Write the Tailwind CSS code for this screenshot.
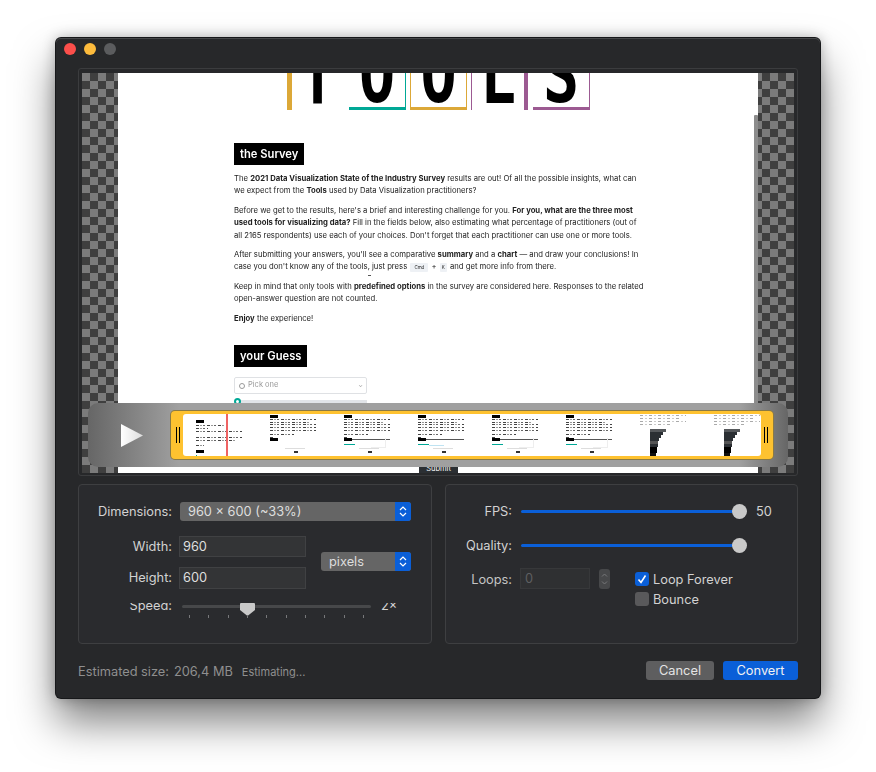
<!DOCTYPE html>
<html lang="en">
<head>
  <meta charset="UTF-8" />
  <title>Convert</title>
  <script src="https://cdn.jsdelivr.net/npm/@tailwindcss/browser@4"></script>
</head>
<body class="bg-white w-[876px] h-[772px] overflow-hidden font-['Inter',sans-serif]">
  <!-- Window -->
  <div class="ml-[56px] mt-[38px] w-[764px] h-[660px] rounded-[5px] bg-[#27282a] shadow-[0_0_0_1px_#17181a,inset_0_1px_0_#47484a,0_24px_42px_rgba(0,0,0,0.5),0_0_14px_rgba(0,0,0,0.3)] text-[12.8px] text-[#d2d2d2]">
    <!-- Title bar -->
    <div class="h-[30px] pl-[8px] pt-[5px] flex gap-[8px]">
      <div class="w-[12px] h-[12px] rounded-full bg-[#fc4f4b]"></div>
      <div class="w-[12px] h-[12px] rounded-full bg-[#fdbb3c]"></div>
      <div class="w-[12px] h-[12px] rounded-full bg-[#5b5c5e]"></div>
    </div>

    <!-- Preview -->
    <div class="relative ml-[22px] w-[720px] h-[408px] border border-[#3b3c3e] rounded-[3px] pt-[4px] pb-[2px] px-[3px]">
      <div class="h-full pl-[36px] bg-[conic-gradient(#3f3f3f_25%,#7b7b7b_0_50%,#3f3f3f_0_75%,#7b7b7b_0)] bg-[length:16px_16px] overflow-hidden">
        <div class="relative h-full w-[640px] bg-white overflow-hidden text-black">
          <!-- Big letters -->
          <div class="ml-[169px] h-[37px] flex gap-[4px] overflow-hidden font-['DejaVu_Sans_Mono',monospace] font-bold text-[60px] leading-none">
            <div class="w-[58px] border-l-[5px] border-[#dca838] flex justify-center items-end"><span class="inline-block origin-bottom scale-y-[1.3] -mb-[5px] mr-[2px]">T</span></div>
            <div class="w-[57px] border-b-[3px] border-r border-[#00a896] flex justify-center items-end"><span class="inline-block origin-bottom scale-y-[1.3] -mb-[7px]">O</span></div>
            <div class="w-[57px] border-b-[3px] border-x border-[#dca838] flex justify-center items-end"><span class="inline-block origin-bottom scale-y-[1.3] -mb-[7px]">O</span></div>
            <div class="w-[57px] border-l border-r-[4px] border-[#9c5a92] flex justify-center items-end"><span class="inline-block origin-bottom scale-y-[1.3] -mb-[5px]">L</span></div>
            <div class="w-[57px] ml-[1px] border-b-[3px] border-r border-[#9c5a92] flex justify-center items-end"><span class="inline-block origin-bottom scale-y-[1.3] -mb-[7px]">S</span></div>
          </div>

          <!-- Article text -->
          <div class="ml-[116px] mt-[33px] text-[7.7px] leading-[12.4px] whitespace-nowrap text-[#222] blur-[0.25px]">
            <div class="inline-block bg-black text-white font-semibold text-[11.2px] leading-[22px] px-[6px]">the Survey</div>
            <p class="mt-[8px]">The <b>2021 Data Visualization State of the Industry Survey</b> results are out! Of all the possible insights, what can<br />we expect from the <b>Tools</b> used by Data Visualization practitioners?</p>
            <p class="mt-[7px]">Before we get to the results, here's a brief and interesting challenge for you. <b>For you, what are the three most</b><br /><b>used tools for visualizing data?</b> Fill in the fields below, also estimating what percentage of practitioners (out of<br />all 2165 respondents) use each of your choices. Don't forget that each practitioner can use one or more tools.</p>
            <p class="mt-[7px]">After submitting your answers, you'll see a comparative <b>summary</b> and a <b>chart</b> — and draw your conclusions! In<br />case you don't know any of the tools, just press <span class="inline-block px-[4px] mx-[1px] bg-[#eef1f5] rounded-[1px] text-[4.5px] leading-[9px] align-middle">Cmd</span> + <span class="inline-block px-[2px] mx-[1px] bg-[#eef1f5] rounded-[1px] text-[4.5px] leading-[9px] align-middle">K</span> and get more info from there.</p>
            <p class="mt-[7px]">Keep in mind that only tools with <b>predefined options</b> in the survey are considered here. Responses to the related<br />open-answer question are not counted.</p>
            <p class="mt-[7px]"><b>Enjoy</b> the experience!</p>
            <div class="block w-fit mt-[20px] bg-black text-white font-semibold text-[11.2px] leading-[22px] px-[6px]">your Guess</div>
            <div class="mt-[10px] w-[133px] h-[17px] border border-[#dfe1e4] rounded-[2px] flex items-center pl-[4px] text-[#999] text-[7.5px]">
              <span class="w-[6px] h-[6px] rounded-full border border-[#999] mr-[3px]"></span>
              <span>Pick one</span>
              <span class="ml-auto mr-[3px] text-[6px]">⌄</span>
            </div>
            <div class="relative mt-[6px] ml-[6px] w-[127px] h-[4px] bg-[#e1e4e8]">
              <div class="absolute -left-[6px] -top-[2px] w-[7px] h-[7px] rounded-full border-2 border-[#00a896] bg-white"></div>
            </div>
          </div>

          <!-- Small artefact near the cursor -->
          <div class="absolute left-[250px] top-[202px] w-[3px] h-px bg-[#555]"></div>
          <!-- Scroll bar -->
          <div class="absolute right-0 top-[42px] w-[4px] h-[320px] bg-[#8c8c8c] rounded-t-[1px]"></div>
          <!-- Clipped submit button -->
          <div class="absolute left-[301px] bottom-0 w-[39px] h-[7px] overflow-hidden bg-[#2b2f33] text-center text-white text-[7.5px] leading-[5px]">Submit</div>
        </div>
      </div>

      <!-- Timeline overlay -->
      <div class="absolute left-[9px] top-[334px] w-[700px] h-[64px] rounded-[10px] bg-[linear-gradient(90deg,#666_0%,#a0a0a0_13%,#a0a0a0_93%,#666_100%)]">
        <svg class="absolute left-[33px] top-[21px]" width="22" height="23" viewBox="0 0 22 23">
          <defs><linearGradient id="play" x1="0" x2="1" y1="0" y2="0"><stop offset="0" stop-color="#fff" /><stop offset="1" stop-color="#dcdcdc" /></linearGradient></defs>
          <polygon points="0,0 22,11.5 0,23" fill="url(#play)" />
        </svg>
        <div class="absolute left-[83px] top-[8px] w-[602px] h-[48px] rounded-[4px] bg-[#fec230] shadow-[0_0_0_1px_#8a7a45]">
          <div class="absolute left-[5px] top-[16px] w-[4px] h-[16px] border-x border-black"></div>
          <div class="absolute right-[5px] top-[16px] w-[4px] h-[16px] border-x border-black"></div>
          <div id="strip" class="absolute left-[12px] top-[3px] w-[578px] h-[42px] rounded-[3px] bg-white overflow-hidden flex"></div>
        </div>
        <div class="absolute left-[138px] top-[11px] w-[1.5px] h-[42px] bg-[#ef6363]"></div>
      </div>
    </div>

    <!-- Settings -->
    <div class="ml-[22px] mt-[8px] w-[720px] flex gap-[13px]">
      <!-- Left panel -->
      <div class="w-[354px] h-[160px] border border-[#3e3f41] rounded-[4px] bg-[#2a2b2e] pt-[17px]">
        <div class="flex items-center h-[19px]">
          <label class="w-[93px] text-right">Dimensions:</label>
          <div class="ml-[8px] w-[231px] h-[19px] rounded-[3px] bg-[#656565] flex items-center pl-[8px] overflow-hidden text-[#dedede]">
            960 × 600 (~33%)
            <div class="ml-auto w-[16px] h-full bg-[#0a5fd8] flex items-center justify-center">
              <svg width="8" height="13" viewBox="0 0 8 13" fill="none" stroke="#fff" stroke-width="1.2"><path d="M1 5 4 2l3 3M1 8l3 3 3-3" /></svg>
            </div>
          </div>
        </div>
        <div class="flex mt-[15px]">
          <div>
            <div class="flex items-center">
              <label class="w-[93px] text-right">Width:</label>
              <div class="ml-[7px] w-[127px] h-[21px] bg-[#333436] border border-[#404143] leading-[19px] pl-[3px] text-[#dedede]">960</div>
            </div>
            <div class="flex items-center mt-[10px]">
              <label class="w-[93px] text-right">Height:</label>
              <div class="ml-[7px] w-[127px] h-[22px] bg-[#333436] border border-[#404143] leading-[20px] pl-[3px] text-[#dedede]">600</div>
            </div>
          </div>
          <div class="ml-[15px] mt-[16px] w-[90px] h-[19px] rounded-[3px] bg-[#656565] flex items-center pl-[8px] overflow-hidden text-[#dedede]">
            pixels
            <div class="ml-auto w-[16px] h-full bg-[#0a5fd8] flex items-center justify-center">
              <svg width="8" height="13" viewBox="0 0 8 13" fill="none" stroke="#fff" stroke-width="1.2"><path d="M1 5 4 2l3 3M1 8l3 3 3-3" /></svg>
            </div>
          </div>
        </div>
        <div class="flex mt-[12px] h-[20px]">
          <div class="w-[93px] h-[11px] mt-[2px] overflow-hidden text-right"><div class="-mt-[5px] leading-[16px]">Speed:</div></div>
          <div class="relative ml-[10px] w-[189px]">
            <div class="mt-[4px] h-[3px] rounded-full bg-[#47484a]"></div>
            <svg class="absolute left-[58px] top-[2px]" width="15" height="13" viewBox="0 0 15 13"><path d="M1 0h13a1 1 0 0 1 1 1v6l-7.5 6L0 7V1a1 1 0 0 1 1-1z" fill="#c9c9c9" /></svg>
            <div class="absolute left-[7px] top-[14px] w-[175px] flex justify-between">
              <i class="w-px h-[3px] bg-[#77787a]"></i><i class="w-px h-[3px] bg-[#77787a]"></i><i class="w-px h-[3px] bg-[#77787a]"></i><i class="w-px h-[3px] bg-[#77787a]"></i><i class="w-px h-[3px] bg-[#77787a]"></i><i class="w-px h-[3px] bg-[#77787a]"></i><i class="w-px h-[3px] bg-[#77787a]"></i><i class="w-px h-[3px] bg-[#77787a]"></i><i class="w-px h-[3px] bg-[#77787a]"></i><i class="w-px h-[3px] bg-[#77787a]"></i>
            </div>
          </div>
          <div class="ml-[10px] h-[11px] mt-[2px] overflow-hidden"><div class="-mt-[5px] leading-[16px]">2×</div></div>
        </div>
      </div>

      <!-- Right panel -->
      <div class="w-[353px] h-[160px] border border-[#3e3f41] rounded-[4px] bg-[#2a2b2e] pt-[17px]">
        <div class="flex items-center h-[19px]">
          <label class="w-[66px] text-right">FPS:</label>
          <div class="relative ml-[9px] w-[218px] h-[3px] rounded-full bg-[#0a5fd8]">
            <div class="absolute -right-[8px] -top-[6px] w-[15px] h-[15px] rounded-full bg-[#c9c9c9]"></div>
          </div>
          <span class="ml-[17px]">50</span>
        </div>
        <div class="flex items-center h-[19px] mt-[15px]">
          <label class="w-[66px] text-right">Quality:</label>
          <div class="relative ml-[9px] w-[218px] h-[3px] rounded-full bg-[#0a5fd8]">
            <div class="absolute -right-[8px] -top-[6px] w-[15px] h-[15px] rounded-full bg-[#c9c9c9]"></div>
          </div>
        </div>
        <div class="flex mt-[13px]">
          <label class="w-[66px] text-right leading-[23px] text-[#c4c4c4]">Loops:</label>
          <div class="ml-[8px] w-[70px] h-[21px] bg-[#2f3032] border border-[#37383a] leading-[19px] pl-[4px] text-[#5e5f61]">0</div>
          <div class="ml-[9px] w-[11px] h-[20px] mt-[1px] rounded-[3px] bg-[#47484a] flex items-center justify-center">
            <svg width="7" height="16" viewBox="0 0 7 16" fill="none" stroke="#77787a" stroke-width="1"><path d="M1 5.500 3.500 3 6 5.500M1 10.500 3.500 13 6 10.500" /></svg>
          </div>
          <div class="ml-[25px]">
            <div class="flex items-center h-[14px] mt-[4px]">
              <div class="w-[14px] h-[14px] rounded-[3px] bg-[#0a5fd8] flex items-center justify-center">
                <svg width="10" height="10" viewBox="0 0 10 10" fill="none" stroke="#fff" stroke-width="1.600"><path d="M1.500 5.500 4 8.500 8.500 1.500" /></svg>
              </div>
              <span class="ml-[4px] pt-[2px]">Loop Forever</span>
            </div>
            <div class="flex items-center h-[14px] mt-[6px]">
              <div class="w-[14px] h-[14px] rounded-[3px] bg-[#59595b]"></div>
              <span class="ml-[4px] pt-[2px]">Bounce</span>
            </div>
          </div>
        </div>
      </div>
    </div>

    <!-- Footer -->
    <div class="ml-[22px] mt-[17px] w-[720px] flex items-center h-[19px]">
      <span class="mt-[3px] text-[#8f8f8f]">Estimated size:</span>
      <span class="mt-[3px] ml-[5px] text-[#8f8f8f]">206,4 MB</span>
      <span class="mt-[3px] ml-[9px] text-[11px] text-[#8f8f8f]">Estimating...</span>
      <button class="ml-auto w-[68px] h-[19px] rounded-[3px] bg-[#5e5e5f] text-[#e4e4e4]">Cancel</button>
      <button class="ml-[9px] w-[75px] h-[19px] rounded-[3px] bg-[#0a5fd8] text-[#f2f2f2]">Convert</button>
    </div>
  </div>

  <script>
    // Timeline thumbnails
    const strip = document.getElementById('strip');
    const dark = "h-px bg-[repeating-linear-gradient(90deg,#444_0_3px,transparent_3px_4px,#999_4px_6px,transparent_6px_7px,#666_7px_9px,transparent_9px_11px)]";
    const pale = "h-px bg-[repeating-linear-gradient(90deg,#aaa_0_3px,transparent_3px_5px,#ccc_5px_7px,transparent_7px_9px)]";

    function block(cls, w, top) {
      const d = document.createElement('div');
      d.className = cls;
      d.style.width = w + 'px';
      d.style.marginTop = top + 'px';
      return d;
    }

    function thumb(kind) {
      const t = document.createElement('div');
      t.className = "relative shrink-0 w-[74px] h-full pl-[13px] blur-[0.3px]";
      if (kind === 'first') {
        t.append(block("h-[3px] bg-black", 8, 6));
        [[28, 2], [12, 2], [46, 2], [46, 5], [40, 2], [8, 4]].forEach(l => t.append(block(dark, l[0], l[1])));
        t.append(block("h-[3px] bg-black", 8, 4));
        t.append(block("h-[2px] bg-[#00a896]", 1, 2));
      } else if (kind === 'chart') {
        [[46, 1], [40, 2], [46, 2], [30, 2]].forEach(l => t.append(block(pale, l[0], l[1])));
        const bars = document.createElement('div');
        bars.className = "absolute left-[23px] top-[15px] flex flex-col";
        [[16, '#55585b'], [13, '#2b2f33'], [11, '#2b2f33'], [9, '#2b2f33'], [8, '#555'], [7.5, '#2b2f33'], [7, '#000'], [7, '#000'], [6, '#111']].forEach(b => {
          const bar = block("h-[3px]", b[0], 0);
          bar.style.backgroundColor = b[1];
          bars.append(bar);
        });
        t.append(bars);
      } else {
        t.append(block("h-[3px] bg-black", 8, 1));
        [[46, 1], [40, 2], [46, 1], [46, 2], [46, 2], [24, 3], [4, 2]].forEach(l => t.append(block(dark, l[0], l[1])));
        const head = document.createElement('div');
        head.className = "absolute left-[13px] top-[24px] flex items-center";
        head.append(block("h-[3px] bg-black", 8, 0));
        if (kind !== 'plain') head.append(block("h-px bg-[#555]", 38, 0));
        t.append(head);
        t.append(block("absolute left-[13px] top-[30px] h-[1px] bg-[#00a896]", kind === 'plain' ? 0 : 11, 0));
        if (kind === 'blue') t.append(block("absolute left-[24px] top-[31px] h-[1px] bg-[#bfe3f2]", 15, 0));
        t.append(block("absolute left-[28px] top-[34px] h-px bg-[#ddd]", 20, 0));
        t.append(block("absolute left-[37px] top-[37px] h-[2px] bg-[#333]", 4, 0));
        if (kind === 'line') t.append(block("absolute left-[40px] top-[24px] h-[10px] border-r border-b border-[#eee]", 15, 0));
      }
      return t;
    }

    ['first', 'plain', 'line', 'blue', 'line', 'line', 'chart', 'chart'].forEach(k => strip.append(thumb(k)));
  </script>
</body>
</html>
